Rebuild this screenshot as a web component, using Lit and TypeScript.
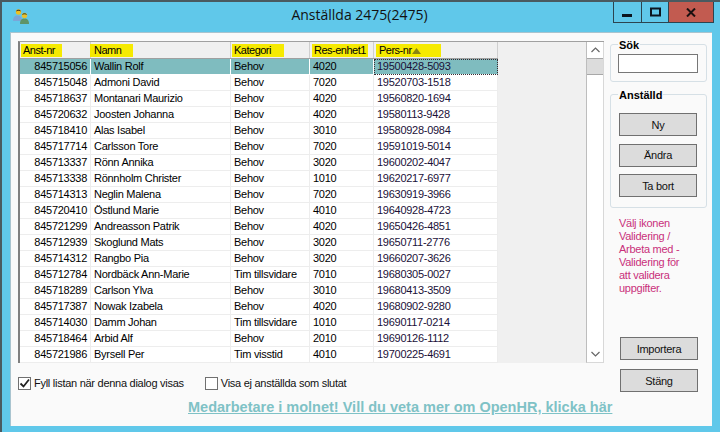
import { LitElement, html, css, svg } from "lit";
import { customElement } from "lit/decorators.js";

type Row = [string, string, string, string, string];

const rows: Row[] = [
  ["845715056", "Wallin Rolf", "Behov", "4020", "19500428-5093"],
  ["845715048", "Admoni David", "Behov", "7020", "19520703-1518"],
  ["845718637", "Montanari Maurizio", "Behov", "4020", "19560820-1694"],
  ["845720632", "Joosten Johanna", "Behov", "4020", "19580113-9428"],
  ["845718410", "Alas Isabel", "Behov", "3010", "19580928-0984"],
  ["845717714", "Carlsson Tore", "Behov", "7020", "19591019-5014"],
  ["845713337", "Rönn Annika", "Behov", "3020", "19600202-4047"],
  ["845713338", "Rönnholm Christer", "Behov", "1010", "19620217-6977"],
  ["845714313", "Neglin Malena", "Behov", "7020", "19630919-3966"],
  ["845720410", "Östlund Marie", "Behov", "4010", "19640928-4723"],
  ["845721299", "Andreasson Patrik", "Behov", "4020", "19650426-4851"],
  ["845712939", "Skoglund Mats", "Behov", "3020", "19650711-2776"],
  ["845714312", "Rangbo Pia", "Behov", "3020", "19660207-3626"],
  ["845712784", "Nordbäck Ann-Marie", "Tim tillsvidare", "7010", "19680305-0027"],
  ["845718289", "Carlson Ylva", "Behov", "3010", "19680413-3509"],
  ["845717387", "Nowak Izabela", "Behov", "4020", "19680902-9280"],
  ["845714030", "Damm Johan", "Tim tillsvidare", "1010", "19690117-0214"],
  ["845718464", "Arbid Alf", "Behov", "2010", "19690126-1112"],
  ["845721986", "Byrsell Per", "Tim visstid", "4010", "19700225-4691"],
  ["", "", "", "", ""],
];

const chevron = (d: string) => svg`<svg width="9" height="6" viewBox="0 0 9 6"><path d=${d} fill="none" stroke="#666" stroke-width="1.2"/></svg>`;

@customElement("app-root")
export class AppRoot extends LitElement {
  static styles = css`
    :host {
      display: block;
      width: 720px;
      height: 432px;
      overflow: hidden;
      font-family: "Liberation Sans", Arial, sans-serif;
      font-size: 11px;
      letter-spacing: -0.27px;
      color: #000;
    }
    .window {
      box-sizing: border-box;
      width: 720px;
      height: 432px;
      background: #60c8ea;
      border-top: 2px solid #4a5a60;
      border-left: 2px solid #4a5a60;
      display: flex;
      flex-direction: column;
    }
    .titlebar {
      height: 30px;
      flex: none;
      display: flex;
      position: relative;
    }
    .app-icon {
      margin: 6px 0 0 11px;
    }
    .title {
      position: absolute;
      left: 0;
      right: 0;
      top: 3px;
      padding-right: 3px;
      text-align: center;
      font: 14px/20px "Open Sans", sans-serif;
      letter-spacing: 0;
      color: #111;
    }
    .controls {
      box-sizing: border-box;
      width: 101px;
      display: flex;
      margin-left: auto;
      margin-right: 6px;
      height: 21px;
      border: 1px solid #2c4450;
      border-top: none;
      position: relative;
    }
    .ctl {
      box-sizing: border-box;
      width: 28px;
      display: flex;
      align-items: center;
      justify-content: center;
      border-right: 1px solid #2c4450;
    }
    .ctl.max {
      width: 27px;
    }
    .ctl.close {
      width: 44px;
      background: #c25b50;
      border-right: none;
    }
    .client {
      margin: 0 8px 0 8px;
      height: 394px;
      background: #fafafa;
      border: 1px solid #a9c4cf;
      border-bottom: none;
      border-right: none;
      box-sizing: border-box;
      display: flex;
      flex-direction: column;
    }
    .main {
      display: flex;
      align-items: flex-start;
    }
    .left {
      width: 599px;
      flex: none;
      padding: 8px 0 0 7px;
      box-sizing: border-box;
    }
    .grid {
      width: 586px;
      height: 322px;
      box-sizing: border-box;
      display: flex;
      border-top: 1px solid #a0a0a0;
      border-left: 2px solid #808080;
      background: #f0f0f0;
      overflow: hidden;
    }
    .table {
      width: 566px;
      flex: none;
      overflow: hidden;
    }
    .row {
      display: grid;
      grid-template-columns: 71px 140px 79px 64px 124px;
      width: 478px;
      height: 16px;
      background: #fff;
    }
    .cell {
      box-sizing: border-box;
      height: 16px;
      line-height: 15px;
      padding-left: 3px;
      border-right: 1px solid #ededed;
      border-bottom: 1px solid #ededed;
      white-space: nowrap;
    }
    .cell.num {
      text-align: right;
      padding-right: 3px;
    }
    .cell.pers {
      color: #1a1038;
    }
    .head {
      height: 16px;
      background: #f0f0f0;
      border-bottom: 1px solid #a0a0a0;
      box-sizing: content-box;
    }
    .head .cell {
      background: #f0f0f0;
      border-right: 1px solid #cfcfcf;
      border-bottom: none;
      padding: 2px 0 0 0;
      line-height: 13px;
      letter-spacing: -0.5px;
    }
    .mark {
      box-sizing: border-box;
      display: inline-flex;
      align-items: center;
      height: 13px;
      padding-left: 2px;
      background: #f6ea00;
      overflow: hidden;
    }
    .m-anst {
      width: 41px;
      margin-left: 1px;
    }
    .m-namn {
      width: 43px;
      margin-left: -1px;
      padding-left: 4px;
    }
    .m-kat {
      width: 52px;
      margin-left: 1px;
    }
    .m-res {
      width: 56px;
      margin-left: 2px;
    }
    .m-pers {
      width: 65px;
      margin-left: 2px;
      padding-left: 3px;
    }
    .arrow {
      flex: none;
    }
    .row.sel .cell {
      background: #7fbcbf;
      border-right-color: #fff;
      border-bottom-color: #fff;
    }
    .row.sel .cell.focus {
      outline: 1px dotted #3c2a30;
      outline-offset: -1px;
      border-right-color: #7fbcbf;
    }
    .scrollbar {
      width: 18px;
      flex: none;
      background: #fff;
      box-sizing: border-box;
      border-left: 1px solid #bdbdbd;
      border-right: 1px solid #d8d8d8;
      border-bottom: 1px solid #d8d8d8;
      display: flex;
      flex-direction: column;
    }
    .sbtn {
      height: 16px;
      flex: none;
      display: flex;
      align-items: center;
      justify-content: center;
    }
    .thumb {
      height: 17px;
      flex: none;
      background: #dcdcdc;
      border-top: 1px solid #a8a8a8;
      border-bottom: 1px solid #a8a8a8;
      box-sizing: border-box;
    }
    .track {
      flex: 1;
    }
    .options {
      display: flex;
      gap: 21px;
      margin: 13px 0 0 0;
    }
    .check {
      display: flex;
      align-items: center;
      gap: 3px;
      height: 14px;
      color: #111;
    }
    .box {
      width: 11px;
      height: 11px;
      background: #fff;
      border: 1px solid #707070;
      display: flex;
    }
    .right {
      flex: 1;
      padding: 11px 5px 0 0;
      box-sizing: border-box;
      display: flex;
      flex-direction: column;
    }
    .group {
      border: 1px solid #d6e0e6;
      border-radius: 3px;
      position: relative;
    }
    .legend {
      position: absolute;
      left: 7px;
      top: -6px;
      padding: 0 1px;
      background: #fafafa;
      font-weight: bold;
      letter-spacing: 0;
      line-height: 12px;
    }
    .search {
      height: 38px;
      box-sizing: border-box;
      padding: 9px 8px 0 7px;
    }
    .search .input {
      height: 19px;
      box-sizing: border-box;
      background: #fff;
      border: 1px solid #777;
    }
    .staff {
      margin-top: 12px;
      height: 114px;
      box-sizing: border-box;
      padding: 18px 9px 0 8px;
      display: flex;
      flex-direction: column;
      gap: 7.5px;
    }
    .btn {
      box-sizing: border-box;
      height: 23px;
      background: #dcdcdc;
      border: 1px solid #707070;
      display: flex;
      align-items: center;
      justify-content: center;
      color: #111;
    }
    .hint {
      margin: 9px 0 0 9px;
      width: 72px;
      line-height: 13px;
      color: #c9307a;
    }
    .actions {
      margin: 42px 0 0 10px;
      width: 78px;
      display: flex;
      flex-direction: column;
      gap: 9px;
    }
    .link {
      margin: 7px 0 0 177px;
      font-size: 14.5px;
      font-weight: bold;
      letter-spacing: 0;
      line-height: 16px;
      color: #7fc2c6;
      text-decoration: underline;
      white-space: nowrap;
    }
  `;

  render() {
    return html`
      <div class="window">
        <div class="titlebar">
          <svg class="app-icon" width="16" height="16" viewBox="0 0 16 16">
            <path d="M0 13c0-4 2-5.500 4.500-5.500S9 9 9 13z" fill="#7aa6d8" />
            <circle cx="5.500" cy="4" r="2.700" fill="#f0c020" />
            <path d="M3 3.500C3.500 1 7.500 1 8 3.500 6.500 2.500 4.500 2.500 3 3.500z" fill="#4a3a20" />
            <path d="M7 16c0-4 1.800-5.500 4.500-5.500S16 12 16 16z" fill="#5f9468" />
            <circle cx="11.500" cy="7.500" r="2.700" fill="#e8c030" />
            <path d="M9 7c.5-2.500 4.500-2.500 5 0-1.500-1-3.500-1-5 0z" fill="#3c4a28" />
          </svg>
          <div class="title">Anställda 2475(2475)</div>
          <div class="controls">
            <div class="ctl">
              <svg width="11" height="11" viewBox="0 0 11 11"><rect y="7" width="10" height="3" fill="#0c1620" /></svg>
            </div>
            <div class="ctl max">
              <svg width="11" height="11" viewBox="0 0 11 11"><rect x="1" y="1.500" width="9" height="7" fill="none" stroke="#0c1620" stroke-width="2" /></svg>
            </div>
            <div class="ctl close">
              <svg width="10" height="9" viewBox="0 0 10 9"><path d="M1 .5l8 8M9 .5l-8 8" stroke="#1a1010" stroke-width="2" fill="none" /></svg>
            </div>
          </div>
        </div>
        <div class="client">
          <div class="main">
            <div class="left">
              <div class="grid">
                <div class="table">
                  <div class="row head">
                    <div class="cell"><span class="mark m-anst">Anst-nr</span></div>
                    <div class="cell"><span class="mark m-namn">Namn</span></div>
                    <div class="cell"><span class="mark m-kat">Kategori</span></div>
                    <div class="cell"><span class="mark m-res">Res-enhet1</span></div>
                    <div class="cell">
                      <span class="mark m-pers">Pers-nr<svg class="arrow" width="9" height="6" viewBox="0 0 9 6"><path d="M4.500 0L9 6H0z" fill="#8a8410" /></svg></span>
                    </div>
                  </div>
                  ${rows.map(
                    (r, i) => html`
                      <div class="row ${i === 0 ? "sel" : ""}">
                        <div class="cell num">${r[0]}</div>
                        <div class="cell">${r[1]}</div>
                        <div class="cell">${r[2]}</div>
                        <div class="cell">${r[3]}</div>
                        <div class="cell pers ${i === 0 ? "focus" : ""}">${r[4]}</div>
                      </div>
                    `
                  )}
                </div>
                <div class="scrollbar">
                  <div class="sbtn">${chevron("M.5 5L4.500 1l4 4")}</div>
                  <div class="thumb"></div>
                  <div class="track"></div>
                  <div class="sbtn">${chevron("M.5 1l4 4 4-4")}</div>
                </div>
              </div>
              <div class="options">
                <div class="check">
                  <span class="box">
                    <svg width="11" height="11" viewBox="0 0 11 11"><path d="M1.500 5.500l3 3L10 1.500" fill="none" stroke="#222" stroke-width="1.800" /></svg>
                  </span>
                  Fyll listan när denna dialog visas
                </div>
                <div class="check">
                  <span class="box"></span>
                  Visa ej anställda som slutat
                </div>
              </div>
            </div>
            <div class="right">
              <div class="group search">
                <div class="legend">Sök</div>
                <div class="input"></div>
              </div>
              <div class="group staff">
                <div class="legend">Anställd</div>
                <div class="btn">Ny</div>
                <div class="btn">Ändra</div>
                <div class="btn">Ta bort</div>
              </div>
              <div class="hint">Välj ikonen Validering / Arbeta med - Validering för att validera uppgifter.</div>
              <div class="actions">
                <div class="btn">Importera</div>
                <div class="btn">Stäng</div>
              </div>
            </div>
          </div>
          <div class="link">Medarbetare i molnet! Vill du veta mer om OpenHR, klicka här</div>
        </div>
      </div>
    `;
  }
}
